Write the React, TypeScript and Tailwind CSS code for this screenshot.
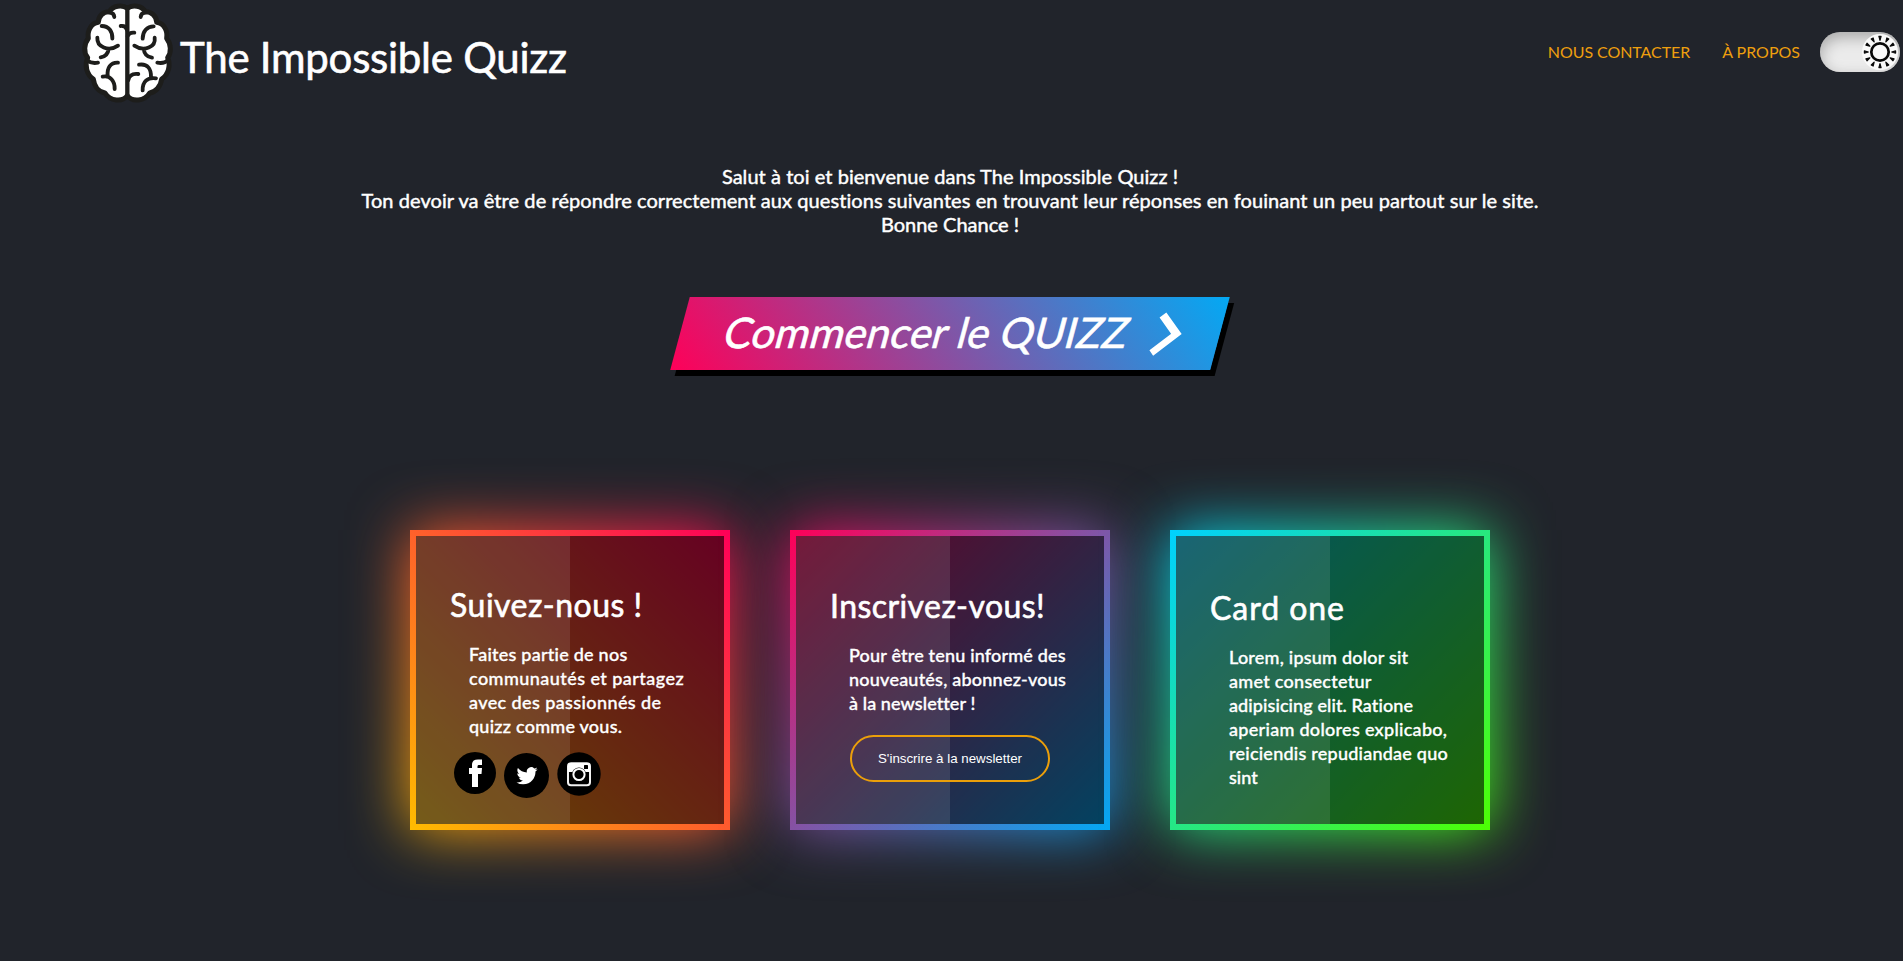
import React from "react";

type LineProps = { text: string; className: string };
const Line = ({ text, className }: LineProps) => (
  <span className={`block w-max whitespace-nowrap ${className}`}>{text}</span>
);

const Brain = () => (
  <svg viewBox="0 0 330 330" className="h-[110px] w-[110px] shrink-0" fill="none" strokeLinecap="round" strokeLinejoin="round" stroke="#1d1d1b">
    <path
      d="M157 25C142 13 113 17 103 35C85 34 70 49 70 67C49 70 36 91 40 115C27 131 25 158 38 173C28 196 35 224 55 237C58 260 72 276 90 279C105 304 143 307 157 287C171 307 209 304 224 279C242 276 257 260 260 237C280 224 288 196 278 173C290 158 288 131 275 115C279 91 266 70 245 67C245 49 229 34 211 35C201 17 172 13 157 25Z"
      fill="#fff" strokeWidth="15"
    />
    <path d="M157 22V290" strokeWidth="13" />
    <path
      d="M104 38Q117 38 118 51M80 78C101 78 113 94 112 116M67 113C65 140 100 157 129 137M101 147C99 163 91 170 77 172M36 180C47 191 58 190 69 188M129 188C106 187 96 204 98 227M83 230C105 225 120 243 119 267M137 78Q152 76 156 90M178 98Q164 96 158 108M211 38Q198 38 197 51M236 79C216 79 203 94 203 116M239 113C243 140 208 157 178 137M206 147C208 163 216 171 231 173M279 180C269 191 258 190 247 188M192 194C218 190 229 207 228 232M243 235C217 231 202 246 203 271M160 240C163 225 174 220 190 222"
      strokeWidth="11.5"
    />
  </svg>
);

const Sun = () => (
  <svg viewBox="-18 -18 36 36" className="h-9 w-9" stroke="#090909" fill="none">
    <circle r="8.7" strokeWidth="2.7" />
    {Array.from({ length: 12 }, (_, i) => (
      <path key={i} d="M0 -11.700L-1.100 -15.600H1.100Z" fill="#090909" strokeWidth="1.2" strokeLinejoin="round" transform={`rotate(${i * 30})`} />
    ))}
  </svg>
);

const Facebook = () => (
  <svg viewBox="0 0 42 42" className="h-[42px] w-[42px]">
    <circle cx="21" cy="21" r="21" />
    <path fill="#fff" d="M18 35V22H15V16H18V13C18 9 20 7.400 24 7.400H28V13H25C24 13 23.500 13.500 23.500 14.500V16H28L27.500 22H24V35Z" />
  </svg>
);

const Twitter = () => (
  <svg viewBox="0 0 45 45" className="mt-px h-[45px] w-[45px]">
    <circle cx="22.500" cy="22.500" r="22.500" />
    <path
      fill="#fff"
      transform="translate(12.500 12.200) scale(.88)"
      d="M23.953 4.570a10 10 0 01-2.825.775 4.958 4.958 0 002.163-2.723c-.951.555-2.005.959-3.127 1.184a4.920 4.920 0 00-8.384 4.482C7.690 8.095 4.067 6.130 1.640 3.162a4.822 4.822 0 00-.666 2.475c0 1.710.870 3.213 2.188 4.096a4.904 4.904 0 01-2.228-.616v.060a4.923 4.923 0 003.946 4.827 4.996 4.996 0 01-2.212.085 4.936 4.936 0 004.604 3.417 9.867 9.867 0 01-6.102 2.105c-.390 0-.779-.023-1.170-.067a13.995 13.995 0 007.557 2.209c9.053 0 13.998-7.496 13.998-13.985 0-.210 0-.420-.015-.630A9.935 9.935 0 0024 4.590z"
    />
  </svg>
);

const Instagram = () => (
  <svg viewBox="0 0 44 44" className="h-[44px] w-[44px]" fill="none">
    <circle cx="22" cy="22" r="21.700" fill="#000" />
    <rect x="11" y="11.300" width="22" height="22" rx="3" stroke="#f2f2f2" strokeWidth="2" />
    <path d="M11 20V14Q11 11 14 11H30Q33 11 33 14V20Z" fill="#fff" />
    <circle cx="22" cy="22.500" r="7" fill="#000" />
    <circle cx="22" cy="22.500" r="5.600" stroke="#fff" strokeWidth="2" />
    <rect x="27" y="13" width="4" height="4" rx=".6" fill="#000" />
  </svg>
);

type CardProps = { gradient: string; padding: string; title: string; titleClass: string; lines: LineProps[]; children?: React.ReactNode };

const Card = ({ gradient, padding, title, titleClass, lines, children }: CardProps) => (
  <section className="relative isolate h-[300px] w-[320px]">
    <div className={`absolute inset-0 -z-20 blur-[30px] ${gradient}`} />
    <div className={`absolute inset-0 -z-20 ${gradient}`} />
    <div className="absolute inset-1.5 -z-10 bg-black/60" />
    <div className="absolute inset-y-1.5 left-1.5 -z-10 w-[154px] bg-white/10" />
    <div className={`pl-10 ${padding}`}>
      <h2 className={`w-max text-[32px] leading-10 whitespace-nowrap [-webkit-text-stroke:0.6px_white] ${titleClass}`}>{title}</h2>
      <p className="mt-[17px] ml-[19px] text-lg leading-6 font-medium [-webkit-text-stroke:0.35px_white]">
        {lines.map((l) => <Line key={l.text} {...l} />)}
      </p>
      {children}
    </div>
  </section>
);

export default function App() {
  return (
    <div className="flex h-[961px] w-full flex-col overflow-hidden bg-[#21242b] font-[Lato,'Open_Sans',sans-serif] text-white">
      <header className="flex h-[110px] shrink-0 items-start">
        <div className="flex pl-[75px]">
          <Brain />
          <h1 className="mt-[32px] -ml-[5px] text-[42px] leading-[50px] tracking-[-0.25px] whitespace-nowrap [-webkit-text-stroke:0.6px_white]">The Impossible Quizz</h1>
        </div>
        <nav className="mt-8 ml-auto flex text-base leading-10 text-[#ee9f0e]">
          <a className="mr-8 whitespace-nowrap tracking-[-0.07px]">NOUS CONTACTER</a>
          <a className="mr-5 whitespace-nowrap">À PROPOS</a>
          <button className="mr-[3px] flex h-10 w-20 items-center justify-end rounded-full bg-[#ebebeb] pr-0.5 shadow-[inset_0_5px_15px_rgba(0,0,0,0.3),inset_0_-5px_15px_rgba(255,255,255,0.3)]">
            <span className="flex h-9 w-9 rounded-full bg-[#fafafa]"><Sun /></span>
          </button>
        </nav>
      </header>

      <main className="flex w-[1900px] flex-col items-center">
        <p className="mt-[54px] flex flex-col items-center text-xl leading-6 [-webkit-text-stroke:0.45px_white]">
          <Line text="Salut à toi et bienvenue dans The Impossible Quizz !" className="tracking-[0.05px]" />
          <Line text="Ton devoir va être de répondre correctement aux questions suivantes en trouvant leur réponses en fouinant un peu partout sur le site." className="tracking-[0.07px]" />
          <Line text="Bonne Chance !" className="" />
        </p>
        <a className="mt-[61px] flex h-[73px] w-[540px] -skew-x-[15deg] items-center justify-between bg-[linear-gradient(45deg,#ff0058,#03a9f4)] pr-9 pl-[45px] text-[42px] leading-none whitespace-nowrap shadow-[6px_6px_0_black]">
          <span className="-translate-y-0.5 tracking-[0.03px] [-webkit-text-stroke:0.6px_white]">Commencer le QUIZZ</span>
          <svg viewBox="0 0 34 50" className="h-[50px] w-[34px] shrink-0" fill="none"><path d="M8 6L26.500 25L6.500 44" stroke="#fff" strokeWidth="7.5" /></svg>
        </a>
        <div className="mt-[160px] flex gap-[60px]">
          <Card
            gradient="bg-[linear-gradient(45deg,#ffbc00,#ff0058)]" padding="pt-[55px]" title="Suivez-nous !" titleClass="tracking-[0.5px]"
            lines={[
              { text: "Faites partie de nos", className: "tracking-[0.24px]" },
              { text: "communautés et partagez", className: "tracking-[0.45px]" },
              { text: "avec des passionnés de", className: "tracking-[0.4px]" },
              { text: "quizz comme vous.", className: "tracking-[0.25px]" },
            ]}
          >
            <div className="mt-3.5 ml-1 flex items-start gap-2"><Facebook /><Twitter /><Instagram /></div>
          </Card>
          <Card
            gradient="bg-[linear-gradient(135deg,#ff0058,#03a9f4)]" padding="pt-[56px]" title="Inscrivez-vous!" titleClass="tracking-[0.43px]"
            lines={[
              { text: "Pour être tenu informé des", className: "tracking-[0.18px]" },
              { text: "nouveautés, abonnez-vous", className: "tracking-[0.23px]" },
              { text: "à la newsletter !", className: "tracking-[0.1px]" },
            ]}
          >
            <button className="mt-[20px] ml-5 flex h-[47px] w-[200px] items-center justify-center rounded-full border-2 border-[#eb9f0a] font-['Liberation_Sans',Arial,sans-serif] text-[13.333px] whitespace-nowrap">
              S'inscrire à la newsletter
            </button>
          </Card>
          <Card
            gradient="bg-[linear-gradient(135deg,#00d0ff,#4dff03)]" padding="pt-[58px]" title="Card one" titleClass="tracking-[0.95px]"
            lines={[
              { text: "Lorem, ipsum dolor sit", className: "tracking-[0.22px]" },
              { text: "amet consectetur", className: "tracking-[0.28px]" },
              { text: "adipisicing elit. Ratione", className: "tracking-[0.1px]" },
              { text: "aperiam dolores explicabo,", className: "tracking-[0.3px]" },
              { text: "reiciendis repudiandae quo", className: "tracking-[0.24px]" },
              { text: "sint", className: "" },
            ]}
          />
        </div>
      </main>
    </div>
  );
}
